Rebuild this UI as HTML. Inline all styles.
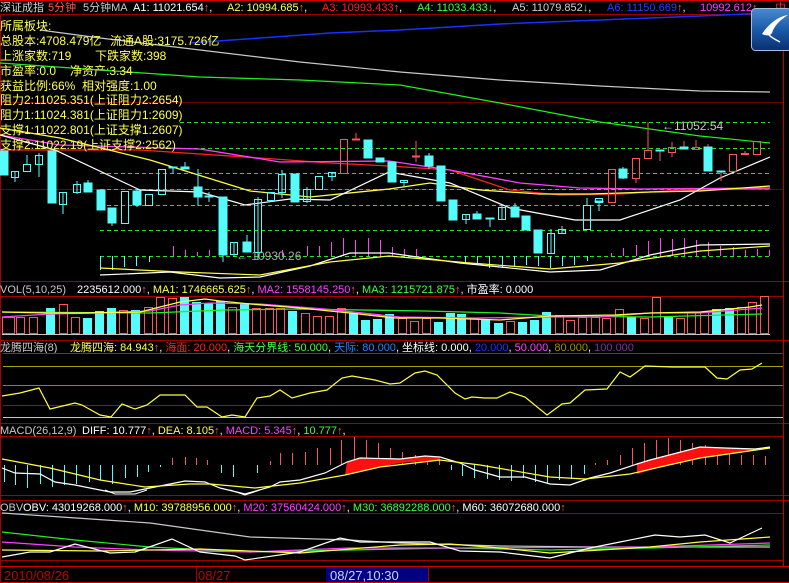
<!DOCTYPE html>
<html><head><meta charset="utf-8"><style>
html,body{margin:0;padding:0;background:#000;width:789px;height:583px;overflow:hidden}
svg{display:block}
text{font-family:"Liberation Sans","Noto Sans CJK SC",sans-serif;font-size:11px}
.info text{font-size:12px}
</style></head><body>
<svg width="789" height="583" viewBox="0 0 789 583" xmlns="http://www.w3.org/2000/svg">
<rect width="789" height="583" fill="#000"/>
<g stroke="#a00000" stroke-width="1" fill="none">
<line x1="0" y1="0.5" x2="789" y2="0.5" stroke="#d00000"/>
<line x1="0" y1="14.5" x2="789" y2="14.5"/>
<line x1="0" y1="102.5" x2="783" y2="102.5" stroke="#700000"/>
<line x1="0" y1="189.5" x2="783" y2="189.5" stroke="#700000"/>
<line x1="0" y1="281.5" x2="789" y2="281.5"/>
<line x1="0" y1="296.5" x2="783" y2="296.5"/>
<line x1="0" y1="340.5" x2="789" y2="340.5"/>
<line x1="0" y1="423.5" x2="789" y2="423.5"/>
<line x1="0" y1="436.5" x2="783" y2="436.5"/>
<line x1="0" y1="495.5" x2="789" y2="495.5"/>
<line x1="0" y1="500.5" x2="789" y2="500.5"/>
<line x1="0" y1="513.5" x2="783" y2="513.5"/>
<line x1="0" y1="560.5" x2="783" y2="560.5"/>
<line x1="0" y1="566.5" x2="789" y2="566.5" stroke="#d00000"/>
<line x1="0" y1="582.5" x2="789" y2="582.5" stroke="#d00000"/>
<line x1="783.5" y1="14" x2="783.5" y2="566" stroke="#c00000"/>
<line x1="0.5" y1="14" x2="0.5" y2="583"/>
<line x1="196.5" y1="566" x2="196.5" y2="583"/>
<line x1="428.5" y1="566" x2="428.5" y2="583"/>
</g>
<text y="11">
<tspan x="0" fill="#d0d0d0">深证成指</tspan><tspan x="48" fill="#ff5454">5分钟</tspan><tspan x="83" fill="#c8c8c8">5分钟MA</tspan>
<tspan x="133" fill="#fff">A1: 11021.654</tspan><tspan fill="#ff5454">↑</tspan><tspan fill="#fff">,</tspan>
<tspan x="227" fill="#ffff54">A2: 10994.685</tspan><tspan fill="#ff5454">↑</tspan><tspan fill="#fff">,</tspan>
<tspan x="322" fill="#ff2020">A3: 10993.433</tspan><tspan fill="#ff5454">↑</tspan><tspan fill="#fff">,</tspan>
<tspan x="417" fill="#40ff40">A4: 11033.433</tspan><tspan fill="#40ff40">↓</tspan><tspan fill="#fff">,</tspan>
<tspan x="512" fill="#d0d0d0">A5: 11079.852</tspan><tspan fill="#40ff40">↓</tspan><tspan fill="#fff">,</tspan>
<tspan x="607" fill="#2040ff">A6: 11150.669</tspan><tspan fill="#ff5454">↑</tspan><tspan fill="#fff">,</tspan>
<tspan x="700" fill="#ff40ff">10992.612</tspan><tspan fill="#ff5454">↑</tspan><tspan x="775" fill="#ff2020">中</tspan>
</text>
<polyline fill="none" stroke="#1830ff" stroke-width="1.5" points="190,43 260,38 330,33 400,30 500,24 600,20 700,16 770,13"/>
<polyline fill="none" stroke="#c8c8c8" stroke-width="1.2" points="40,30 100,38 200,50 300,62 400,72 500,80 600,86 700,91 770,92"/>
<polyline fill="none" stroke="#20f020" stroke-width="1.2" points="0,63 100,70 200,77 300,80 400,85 500,103 600,122 700,136 770,143"/>
<g stroke="#22e022" stroke-dasharray="4,3" stroke-width="1">
<line x1="180" y1="122.5" x2="770" y2="122.5"/>
<line x1="180" y1="148.5" x2="770" y2="148.5"/>
<line x1="100" y1="173.5" x2="770" y2="173.5"/>
<line x1="100" y1="205.5" x2="770" y2="205.5"/>
<line x1="100" y1="230.5" x2="770" y2="230.5"/>
<line x1="100" y1="256.5" x2="770" y2="256.5"/>
</g>
<line x1="100" y1="189.5" x2="770" y2="189.5" stroke="#ff40ff" stroke-dasharray="4,3"/>
<polyline fill="none" stroke="#ff2020" stroke-width="1.3" points="0,150 140,150 260,158 330,163 389,166 450,170 510,190 560,195 620,194 680,190 770,189"/>
<polyline fill="none" stroke="#ff40ff" stroke-width="1.3" points="0,135 60,145 200,149 280,162 389,161 450,170 520,183 580,188 640,189 770,188"/>
<polyline fill="none" stroke="#ffff40" stroke-width="1.3" points="0,128 60,138 150,160 250,191 310,197 389,189 430,183 480,190 540,194 590,194 650,192 700,191 770,186"/>
<polyline fill="none" stroke="#ffffff" stroke-width="1.2" points="0,135 55,150 140,190 200,192 245,205 290,199 330,200 389,172 450,183 510,208 575,220 620,220 680,200 720,178 770,157"/>
<g fill="#54fcfc" stroke="#54fcfc" stroke-width="1">
<line x1="15" y1="171" x2="15" y2="182"/><line x1="27" y1="155" x2="27" y2="164"/><line x1="39" y1="153" x2="39" y2="177"/>
<line x1="63" y1="192" x2="63" y2="214"/><line x1="77" y1="181" x2="77" y2="194"/><line x1="88" y1="180" x2="88" y2="192"/>
<line x1="112" y1="208" x2="112" y2="226"/><line x1="137" y1="188" x2="137" y2="207"/><line x1="173" y1="167" x2="173" y2="173"/>
<line x1="185" y1="162" x2="185" y2="169"/><line x1="198" y1="169" x2="198" y2="206"/><line x1="209" y1="192" x2="209" y2="202"/>
<line x1="223" y1="197" x2="223" y2="262"/><line x1="234" y1="242" x2="234" y2="257"/><line x1="247" y1="235" x2="247" y2="252"/>
<line x1="258" y1="197" x2="258" y2="260"/><line x1="282" y1="170" x2="282" y2="198"/><line x1="307" y1="187" x2="307" y2="203"/>
<line x1="332" y1="172" x2="332" y2="181"/><line x1="404" y1="180" x2="404" y2="187"/><line x1="429" y1="153" x2="429" y2="169"/>
<line x1="466" y1="214" x2="466" y2="224"/><line x1="477" y1="211" x2="477" y2="219"/><line x1="490" y1="218" x2="490" y2="227"/>
<line x1="502" y1="205" x2="502" y2="219"/><line x1="515" y1="203" x2="515" y2="217"/><line x1="551" y1="229" x2="551" y2="253"/>
<line x1="562" y1="226" x2="562" y2="233"/><line x1="587" y1="198" x2="587" y2="205"/><line x1="599" y1="201" x2="599" y2="211"/>
<line x1="623" y1="167" x2="623" y2="179"/><line x1="721" y1="171" x2="721" y2="181" stroke="#ff5454"/>
<line x1="660" y1="150" x2="660" y2="161" stroke="#ff5454"/><line x1="684" y1="141" x2="684" y2="149" stroke="#ff5454"/>
<line x1="708" y1="144" x2="708" y2="171" stroke="#ff5454"/><line x1="368" y1="140" x2="368" y2="145" stroke="#ff5454"/>
<rect x="0" y="151" width="8" height="24"/><rect x="48" y="151" width="8" height="52"/><rect x="84" y="183" width="8" height="9"/>
<rect x="97" y="190" width="8" height="20"/><rect x="108" y="208" width="8" height="15"/><rect x="133" y="191" width="8" height="14"/>
<rect x="181" y="167" width="8" height="2"/><rect x="194" y="187" width="8" height="10"/><rect x="205" y="196" width="8" height="1"/>
<rect x="219" y="197" width="8" height="58"/><rect x="243" y="242" width="8" height="10"/><rect x="291" y="174" width="8" height="28"/>
<rect x="364" y="140" width="8" height="18"/><rect x="376" y="158" width="8" height="4"/><rect x="388" y="162" width="8" height="20"/>
<rect x="425" y="156" width="8" height="10"/><rect x="437" y="166" width="8" height="35"/><rect x="449" y="200" width="8" height="20"/>
<rect x="473" y="214" width="8" height="5"/><rect x="511" y="207" width="8" height="10"/><rect x="522" y="216" width="8" height="14"/>
<rect x="534" y="230" width="8" height="23"/><rect x="619" y="169" width="8" height="9"/><rect x="680" y="147" width="8" height="2"/>
<rect x="704" y="147" width="8" height="24"/>
<rect x="169" y="167" width="8" height="1"/><rect x="486" y="218" width="8" height="1"/><rect x="595" y="201" width="8" height="1"/>
<rect x="656" y="150" width="8" height="1"/><rect x="717" y="171" width="8" height="1"/>
</g>
<g fill="none" stroke="#54fcfc" stroke-width="1">
<rect x="11.5" y="171.5" width="7" height="6"/><rect x="23.5" y="164.5" width="7" height="7"/><rect x="35.5" y="155.5" width="7" height="9"/>
<rect x="59.5" y="192.5" width="7" height="12"/><rect x="73.5" y="184.5" width="7" height="8"/><rect x="121.5" y="191.5" width="7" height="32"/>
<rect x="145.5" y="194.5" width="7" height="11"/><rect x="158.5" y="169.5" width="7" height="25"/><rect x="230.5" y="242.5" width="7" height="12"/>
<rect x="254.5" y="199.5" width="7" height="53"/><rect x="267.5" y="192.5" width="7" height="8"/><rect x="278.5" y="174.5" width="7" height="18"/>
<rect x="303.5" y="189.5" width="7" height="12"/><rect x="315.5" y="176.5" width="7" height="13"/><rect x="328.5" y="172.5" width="7" height="4"/>
<rect x="400.5" y="180.5" width="7" height="2"/><rect x="462.5" y="214.5" width="7" height="5"/><rect x="498.5" y="207.5" width="7" height="12"/>
<rect x="547.5" y="233.5" width="7" height="20"/><rect x="558.5" y="229.5" width="7" height="4"/><rect x="583.5" y="205.5" width="7" height="24"/>
<rect x="595.5" y="198.5" width="7" height="4"/>
</g>
<g fill="none" stroke="#ff5454" stroke-width="1">
<line x1="416" y1="141" x2="416" y2="162"/><line x1="412" y1="156.5" x2="420" y2="156.5" stroke-width="2"/>
<line x1="356" y1="133" x2="356" y2="140"/><line x1="352" y1="139.5" x2="360" y2="139.5" stroke-width="2"/>
<line x1="636" y1="178" x2="636" y2="183"/><line x1="648" y1="122" x2="648" y2="150"/><line x1="672" y1="142" x2="672" y2="147"/>
<line x1="696" y1="140" x2="696" y2="147"/><line x1="745" y1="151" x2="745" y2="153"/><line x1="672" y1="152" x2="672" y2="157"/>
<rect x="340.5" y="139.5" width="7" height="34"/><rect x="608.5" y="169.5" width="7" height="33"/><rect x="632.5" y="158.5" width="7" height="20"/>
<rect x="644.5" y="150.5" width="7" height="8"/><rect x="668.5" y="147.5" width="7" height="5"/><rect x="692.5" y="147.5" width="7" height="2"/>
<rect x="729.5" y="154.5" width="7" height="17"/><rect x="741.5" y="153.5" width="7" height="1"/><rect x="753.5" y="141.5" width="7" height="13"/>
</g>
<text x="662" y="130" fill="#c8c8c8" style="font-size:12px">←11052.54</text>
<text x="236" y="260" fill="#a8a8a8" style="font-size:12px">← 10930.26</text>
<g stroke="#54fcfc" stroke-width="1">
<line x1="100.5" y1="256" x2="100.5" y2="270"/><line x1="112.5" y1="256" x2="112.5" y2="270"/><line x1="124.5" y1="256" x2="124.5" y2="267"/>
<line x1="136.5" y1="256" x2="136.5" y2="266"/><line x1="149.5" y1="256" x2="149.5" y2="262"/>
<line x1="465.5" y1="256" x2="465.5" y2="262"/><line x1="477.5" y1="256" x2="477.5" y2="265"/><line x1="489.5" y1="256" x2="489.5" y2="268"/>
<line x1="502.5" y1="256" x2="502.5" y2="268"/><line x1="514.5" y1="256" x2="514.5" y2="266"/><line x1="526.5" y1="256" x2="526.5" y2="265"/>
<line x1="538.5" y1="256" x2="538.5" y2="266"/><line x1="550.5" y1="256" x2="550.5" y2="268"/><line x1="562.5" y1="256" x2="562.5" y2="266"/>
<line x1="574.5" y1="256" x2="574.5" y2="265"/><line x1="587.5" y1="256" x2="587.5" y2="261"/>
</g>
<g stroke="#ff40ff" stroke-width="1">
<line x1="173.5" y1="246" x2="173.5" y2="256"/><line x1="185.5" y1="250" x2="185.5" y2="256"/><line x1="197.5" y1="252" x2="197.5" y2="256"/>
<line x1="209.5" y1="250" x2="209.5" y2="256"/><line x1="282.5" y1="250" x2="282.5" y2="256"/><line x1="307.5" y1="246" x2="307.5" y2="256"/>
<line x1="319.5" y1="246" x2="319.5" y2="256"/><line x1="331.5" y1="242" x2="331.5" y2="256"/><line x1="343.5" y1="238" x2="343.5" y2="256"/>
<line x1="355.5" y1="240" x2="355.5" y2="256"/><line x1="368.5" y1="238" x2="368.5" y2="256"/><line x1="380.5" y1="240" x2="380.5" y2="256"/>
<line x1="392.5" y1="247" x2="392.5" y2="256"/><line x1="404.5" y1="249" x2="404.5" y2="256"/><line x1="416.5" y1="249" x2="416.5" y2="256"/>
<line x1="611.5" y1="253" x2="611.5" y2="256"/><line x1="623.5" y1="248" x2="623.5" y2="256"/><line x1="636.5" y1="245" x2="636.5" y2="256"/>
<line x1="648.5" y1="241" x2="648.5" y2="256"/><line x1="660.5" y1="238" x2="660.5" y2="256"/><line x1="672.5" y1="239" x2="672.5" y2="256"/>
<line x1="684.5" y1="238" x2="684.5" y2="256"/><line x1="696.5" y1="240" x2="696.5" y2="256"/><line x1="708.5" y1="242" x2="708.5" y2="256"/>
<line x1="720.5" y1="246" x2="720.5" y2="256"/><line x1="733.5" y1="247" x2="733.5" y2="256"/><line x1="745.5" y1="250" x2="745.5" y2="256"/>
<line x1="757.5" y1="249" x2="757.5" y2="256"/><line x1="769.5" y1="250" x2="769.5" y2="256"/>
</g>
<polyline fill="none" stroke="#ffffff" stroke-width="1.2" points="100,275 170,272 220,278 260,277 310,266 350,253 389,253 460,263 550,272 600,270 650,255 700,245 770,244"/>
<polyline fill="none" stroke="#ffff40" stroke-width="1.2" points="100,268 180,272 260,275 330,262 389,256 470,263 550,269 620,263 700,251 770,246"/>
<g fill="#ffff54" class="info">
<text x="0" y="30">所属板块:</text>
<text y="45"><tspan x="0">总股本:4708.479亿</tspan><tspan x="110">流通A股:3175.726亿</tspan></text>
<text y="60"><tspan x="0">上涨家数:719</tspan><tspan x="95">下跌家数:398</tspan></text>
<text y="75"><tspan x="0">市盈率:0.0</tspan><tspan x="70">净资产:3.34</tspan></text>
<text y="90"><tspan x="0">获益比例:66%</tspan><tspan x="82">相对强度:1.00</tspan></text>
<text x="0" y="104">阻力2:11025.351(上证阻力2:2654)</text>
<text x="0" y="119">阻力1:11024.381(上证阻力1:2609)</text>
<text x="0" y="134">支撑1:11022.801(上证支撑1:2607)</text>
<text x="0" y="149">支撑2:11022.19(上证支撑2:2562)</text>
</g>
<text y="293"><tspan x="0" fill="#c8c8c8">VOL(5,10,25)</tspan><tspan x="77" fill="#fff">2235612.000</tspan><tspan fill="#ff5454">↑</tspan><tspan fill="#fff">, </tspan><tspan fill="#ffff54">MA1: 1746665.625</tspan><tspan fill="#ff5454">↑</tspan><tspan fill="#fff">, </tspan><tspan fill="#ff40ff">MA2: 1558145.250</tspan><tspan fill="#ff5454">↑</tspan><tspan fill="#fff">, </tspan><tspan fill="#40ff40">MA3: 1215721.875</tspan><tspan fill="#ff5454">↑</tspan><tspan fill="#fff">, 市盈率: 0.000</tspan></text>
<g fill="#54fcfc">
<rect x="46" y="308" width="9" height="26"/><rect x="83" y="318" width="9" height="16"/><rect x="95" y="311" width="9" height="23"/>
<rect x="107" y="308" width="9" height="26"/><rect x="131" y="310" width="9" height="24"/><rect x="180" y="297" width="9" height="37"/>
<rect x="192" y="302" width="9" height="32"/><rect x="204" y="303" width="9" height="31"/><rect x="216" y="301" width="9" height="33"/>
<rect x="240" y="303" width="9" height="31"/><rect x="288" y="311" width="9" height="23"/><rect x="349" y="313" width="9" height="21"/>
<rect x="361" y="320" width="9" height="14"/><rect x="373" y="319" width="9" height="15"/><rect x="385" y="314" width="9" height="20"/>
<rect x="434" y="322" width="9" height="12"/><rect x="446" y="313" width="9" height="21"/><rect x="457" y="314" width="9" height="20"/>
<rect x="481" y="320" width="9" height="14"/><rect x="494" y="323" width="9" height="11"/><rect x="518" y="322" width="9" height="12"/>
<rect x="530" y="320" width="9" height="14"/><rect x="542" y="312" width="9" height="22"/><rect x="627" y="317" width="9" height="17"/>
<rect x="664" y="316" width="9" height="18"/><rect x="712" y="309" width="9" height="25"/><rect x="725" y="308" width="9" height="26"/>
</g>
<g fill="none" stroke="#ff5454">
<rect x="2.5" y="317.5" width="12" height="16"/><rect x="16.5" y="317.5" width="8" height="16"/><rect x="29.5" y="317.5" width="8" height="16"/>
<rect x="59.5" y="304.5" width="8" height="29"/><rect x="71.5" y="317.5" width="8" height="16"/><rect x="119.5" y="310.5" width="8" height="23"/>
<rect x="144.5" y="307.5" width="8" height="26"/><rect x="156.5" y="297.5" width="8" height="36"/><rect x="168.5" y="298.5" width="8" height="35"/>
<rect x="228.5" y="307.5" width="8" height="26"/><rect x="252.5" y="308.5" width="8" height="25"/><rect x="265.5" y="308.5" width="8" height="25"/>
<rect x="276.5" y="308.5" width="8" height="25"/><rect x="301.5" y="313.5" width="8" height="20"/><rect x="313.5" y="316.5" width="8" height="17"/>
<rect x="325.5" y="316.5" width="8" height="17"/><rect x="337.5" y="308.5" width="8" height="25"/><rect x="398.5" y="318.5" width="8" height="15"/>
<rect x="410.5" y="321.5" width="8" height="12"/><rect x="422.5" y="318.5" width="8" height="15"/><rect x="470.5" y="318.5" width="8" height="15"/>
<rect x="506.5" y="321.5" width="8" height="12"/><rect x="555.5" y="315.5" width="8" height="18"/><rect x="566.5" y="320.5" width="8" height="13"/>
<rect x="578.5" y="317.5" width="8" height="16"/><rect x="591.5" y="317.5" width="8" height="16"/><rect x="602.5" y="318.5" width="8" height="15"/>
<rect x="615.5" y="309.5" width="8" height="24"/><rect x="640.5" y="318.5" width="8" height="15"/><rect x="652.5" y="297.5" width="8" height="36"/>
<rect x="676.5" y="318.5" width="8" height="15"/><rect x="687.5" y="312.5" width="8" height="21"/><rect x="700.5" y="312.5" width="8" height="21"/>
<rect x="737.5" y="307.5" width="8" height="26"/><rect x="748.5" y="302.5" width="8" height="31"/><rect x="760.5" y="296.5" width="8" height="37"/>
</g>
<line x1="2" y1="334.5" x2="770" y2="334.5" stroke="#c8c8c8"/>
<polyline fill="none" stroke="#20f020" stroke-width="1.3" points="2,312 150,313 225,310 300,309 425,311 500,313 550,316 650,317 762,314"/>
<polyline fill="none" stroke="#ff40ff" stroke-width="1.3" points="2,317 50,314 100,313 150,311 180,305 210,303 260,304 325,309 400,317 475,318 550,317 600,317 650,313 700,313 762,308"/>
<polyline fill="none" stroke="#ffff40" stroke-width="1.3" points="2,312 45,313 80,313 140,312 180,302 205,299 220,301 250,304 300,308 350,313 395,318 440,318 500,320 550,316 615,315 650,313 700,312 750,307 762,305"/>
<text y="351"><tspan x="0" fill="#c8c8c8">龙腾四海(8)</tspan><tspan x="70" fill="#ffff54">龙腾四海: 84.943</tspan><tspan fill="#ff5454">↑</tspan><tspan fill="#fff">, </tspan><tspan fill="#ff2020">海面: 20.000</tspan><tspan fill="#fff">, </tspan><tspan fill="#40ff40">海天分界线: 50.000</tspan><tspan fill="#fff">, </tspan><tspan fill="#2080ff">天际: 80.000</tspan><tspan fill="#fff">, 坐标线: 0.000, </tspan><tspan fill="#2030ff">20.000</tspan><tspan fill="#fff">, </tspan><tspan fill="#ff40ff">50.000</tspan><tspan fill="#fff">, </tspan><tspan fill="#a09000">80.000</tspan><tspan fill="#fff">, </tspan><tspan fill="#8030a0">100.000</tspan></text>
<line x1="3" y1="353.5" x2="783" y2="353.5" stroke="#802080"/>
<line x1="3" y1="366.5" x2="783" y2="366.5" stroke="#a0a000"/>
<line x1="3" y1="385.5" x2="783" y2="385.5" stroke="#ff20ff"/>
<line x1="3" y1="405.5" x2="783" y2="405.5" stroke="#2020ff"/>
<line x1="3" y1="417.5" x2="783" y2="417.5" stroke="#c8c8c8"/>
<polyline fill="none" stroke="#ffff40" stroke-width="1.2" points="2,396 20,393 39,388 50,409 75,403 82,405 100,415 111,417 122,404 135,409 147,405 160,395 185,395 197,407 207,407 222,417 232,415 245,417 257,398 270,396 280,390 292,398 310,393 327,390 342,378 352,376 375,380 390,384 400,383 415,373 425,371 437,375 455,393 465,399 472,397 485,398 497,398 510,392 525,397 547,415 562,404 570,403 585,390 607,389 620,372 630,377 645,366 672,367 705,367 717,378 727,379 740,370 752,369 762,363"/>
<text y="434"><tspan x="0" fill="#c8c8c8">MACD(26,12,9)</tspan><tspan x="82" fill="#fff">DIFF: 10.777</tspan><tspan fill="#ff5454">↑</tspan><tspan fill="#fff">, </tspan><tspan fill="#ffff54">DEA: 8.105</tspan><tspan fill="#ff5454">↑</tspan><tspan fill="#fff">, </tspan><tspan fill="#ff40ff">MACD: 5.345</tspan><tspan fill="#ff5454">↑</tspan><tspan fill="#fff">, </tspan><tspan fill="#40ff40">10.777</tspan><tspan fill="#ff5454">↑</tspan><tspan fill="#fff">,</tspan></text>
<g stroke="#54fcfc">
<line x1="4.5" y1="465" x2="4.5" y2="482"/><line x1="15.5" y1="465" x2="15.5" y2="485"/><line x1="27.5" y1="465" x2="27.5" y2="488"/>
<line x1="40.5" y1="465" x2="40.5" y2="484"/><line x1="52.5" y1="465" x2="52.5" y2="487"/><line x1="64.5" y1="465" x2="64.5" y2="485"/>
<line x1="76.5" y1="465" x2="76.5" y2="484"/><line x1="89.5" y1="465" x2="89.5" y2="482"/><line x1="100.5" y1="465" x2="100.5" y2="480"/>
<line x1="112.5" y1="465" x2="112.5" y2="484"/><line x1="125.5" y1="465" x2="125.5" y2="478"/><line x1="137.5" y1="465" x2="137.5" y2="477"/>
<line x1="148.5" y1="465" x2="148.5" y2="472"/><line x1="160.5" y1="465" x2="160.5" y2="467"/>
<line x1="221.5" y1="465" x2="221.5" y2="473"/><line x1="233.5" y1="465" x2="233.5" y2="477"/><line x1="257.5" y1="465" x2="257.5" y2="473"/>
<line x1="451.5" y1="465" x2="451.5" y2="470"/><line x1="462.5" y1="465" x2="462.5" y2="476"/><line x1="474.5" y1="465" x2="474.5" y2="478"/>
<line x1="487.5" y1="465" x2="487.5" y2="479"/><line x1="499.5" y1="465" x2="499.5" y2="480"/><line x1="511.5" y1="465" x2="511.5" y2="481"/>
<line x1="523.5" y1="465" x2="523.5" y2="478"/><line x1="535.5" y1="465" x2="535.5" y2="482"/><line x1="547.5" y1="465" x2="547.5" y2="484"/>
<line x1="559.5" y1="465" x2="559.5" y2="480"/><line x1="571.5" y1="465" x2="571.5" y2="479"/><line x1="584.5" y1="465" x2="584.5" y2="474"/>
</g>
<g stroke="#ff5454">
<line x1="172.5" y1="465" x2="172.5" y2="458"/><line x1="185.5" y1="465" x2="185.5" y2="457"/><line x1="196.5" y1="465" x2="196.5" y2="458"/>
<line x1="207.5" y1="465" x2="207.5" y2="460"/><line x1="270.5" y1="465" x2="270.5" y2="461"/><line x1="280.5" y1="465" x2="280.5" y2="453"/>
<line x1="292.5" y1="465" x2="292.5" y2="453"/><line x1="305.5" y1="465" x2="305.5" y2="452"/><line x1="317.5" y1="465" x2="317.5" y2="448"/>
<line x1="330.5" y1="465" x2="330.5" y2="448"/><line x1="341.5" y1="465" x2="341.5" y2="440"/><line x1="354.5" y1="465" x2="354.5" y2="437"/>
<line x1="366.5" y1="465" x2="366.5" y2="440"/><line x1="378.5" y1="465" x2="378.5" y2="443"/><line x1="390.5" y1="465" x2="390.5" y2="448"/>
<line x1="402.5" y1="465" x2="402.5" y2="452"/><line x1="415.5" y1="465" x2="415.5" y2="455"/><line x1="427.5" y1="465" x2="427.5" y2="456"/>
<line x1="439.5" y1="465" x2="439.5" y2="460"/>
<line x1="595.5" y1="465" x2="595.5" y2="463"/><line x1="607.5" y1="465" x2="607.5" y2="460"/><line x1="620.5" y1="465" x2="620.5" y2="455"/>
<line x1="632.5" y1="465" x2="632.5" y2="448"/><line x1="644.5" y1="465" x2="644.5" y2="443"/><line x1="656.5" y1="465" x2="656.5" y2="440"/>
<line x1="668.5" y1="465" x2="668.5" y2="438"/><line x1="680.5" y1="465" x2="680.5" y2="440"/><line x1="692.5" y1="465" x2="692.5" y2="443"/>
<line x1="705.5" y1="465" x2="705.5" y2="445"/><line x1="717.5" y1="465" x2="717.5" y2="450"/><line x1="729.5" y1="465" x2="729.5" y2="453"/>
<line x1="741.5" y1="465" x2="741.5" y2="455"/><line x1="753.5" y1="465" x2="753.5" y2="455"/><line x1="765.5" y1="465" x2="765.5" y2="456"/>
</g>
<polygon fill="#ff1010" points="347,462 360,458 400,459 425,456 440,457 440,460 400,463 380,467 345,475"/>
<polygon fill="#ff1010" points="637,464 650,460 700,447 725,448 755,449 770,447 770,448 700,458 660,467 637,474"/>
<polyline fill="none" stroke="#ffffff" stroke-width="1.2" points="2,468 15,473 40,474 55,482 75,485 110,492 130,492 145,489 165,485 185,481 205,482 220,488 245,494 270,487 280,482 300,480 325,473 347,462 360,458 400,459 425,456 440,457 460,463 475,470 500,477 525,477 550,484 570,485 590,478 610,473 637,464 650,460 700,447 725,448 755,449 770,447"/>
<polyline fill="none" stroke="#ffff40" stroke-width="1.2" points="2,459 50,468 100,480 145,487 190,484 210,484 255,488 300,483 345,475 380,467 440,460 480,465 550,477 585,479 630,474 660,467 700,458 770,448"/>
<text y="511"><tspan x="0" fill="#c8c8c8">OBV</tspan><tspan x="23" fill="#fff">OBV: 43019268.000</tspan><tspan fill="#ff5454">↑</tspan><tspan fill="#fff">, </tspan><tspan fill="#ffff54">M10: 39788956.000</tspan><tspan fill="#ff5454">↑</tspan><tspan fill="#fff">, </tspan><tspan fill="#ff40ff">M20: 37560424.000</tspan><tspan fill="#ff5454">↑</tspan><tspan fill="#fff">, </tspan><tspan fill="#40ff40">M30: 36892288.000</tspan><tspan fill="#ff5454">↑</tspan><tspan fill="#fff">, M60: 36072680.000</tspan><tspan fill="#ff5454">↑</tspan></text>
<polyline fill="none" stroke="#c8c8c8" stroke-width="1.2" points="2,513 150,523 250,537 350,540 400,543 500,546 600,547 770,547"/>
<polyline fill="none" stroke="#20f020" stroke-width="1.2" points="2,532 75,540 150,547 250,552 350,550 450,548 550,550 650,548 770,545"/>
<polyline fill="none" stroke="#ff40ff" stroke-width="1.2" points="2,542 75,547 150,550 250,552 350,548 450,548 650,547 770,543"/>
<polyline fill="none" stroke="#ffff40" stroke-width="1.2" points="2,550 100,551 200,549 300,553 400,545 450,544 500,548 550,553 650,547 700,542 770,537"/>
<polyline fill="none" stroke="#ffffff" stroke-width="1.2" points="2,557 30,552 50,552 75,544 110,553 135,552 172,539 200,552 235,556 245,560 300,552 340,538 360,542 430,542 460,551 500,552 550,558 590,548 620,542 655,535 680,537 705,535 730,543 762,528"/>
<polyline fill="none" stroke="#fff" points="105,490 115,494 135,494 147,490"/>
<polyline fill="none" stroke="#fff" points="230,490 245,495 260,490"/>
<text x="4" y="580" fill="#c00000" style="font-size:13px">2010/08/26</text>
<text x="198" y="580" fill="#c00000" style="font-size:13px">08/27</text>
<rect x="326" y="567" width="102" height="15" fill="#000080"/>
<text x="330" y="580" fill="#d0d0f0" style="font-size:13px">08/27,10:30</text>
<defs><linearGradient id="lg" x1="0" y1="0" x2="0" y2="1"><stop offset="0" stop-color="#4a8ad0"/><stop offset="0.5" stop-color="#1a5aa8"/><stop offset="1" stop-color="#0a2f70"/></linearGradient></defs>
<rect x="751.5" y="8.5" width="40" height="42" rx="4" fill="url(#lg)" stroke="#a0c0e8"/>
<path d="M762 34 C770 22 780 16 788 15 C780 20 774 26 772 33 C770 36 766 36 762 34 Z" fill="#fff"/>
<path d="M769 35 C772 38 776 40 780 42" stroke="#fff" stroke-width="1.5" fill="none"/>
</svg>
</body></html>
